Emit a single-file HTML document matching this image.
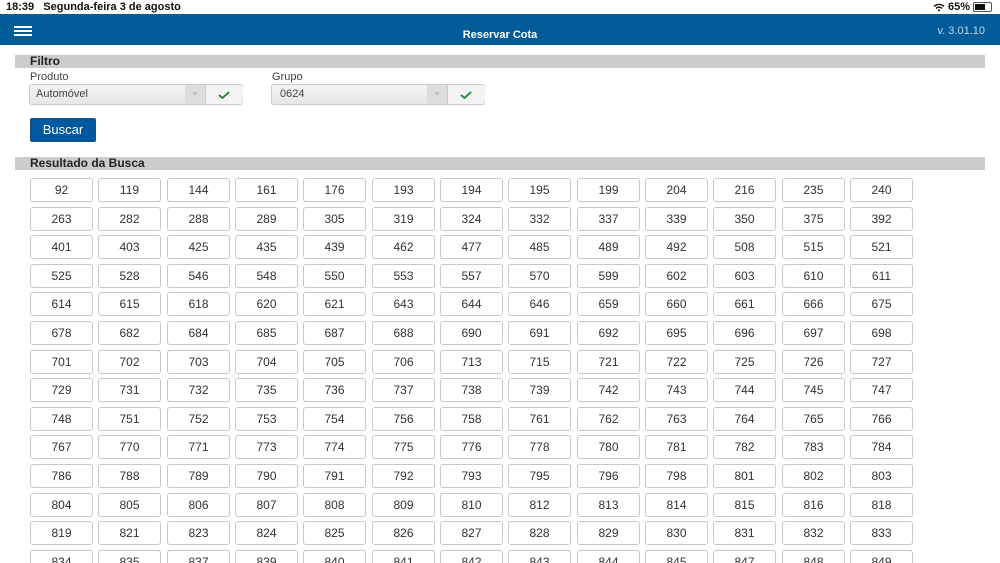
<!DOCTYPE html>
<html style="overflow:hidden;height:563px"><head><meta charset="utf-8"><style>
html,body{margin:0;width:1000px;height:563px;overflow:hidden}
body{background:#fff;font-family:"Liberation Sans",sans-serif;position:relative}
.a{position:absolute}
.bar{position:absolute;left:15px;width:970px;height:13px;background:#cccccc;font-size:12px;font-weight:bold;color:#222;line-height:13px;padding-left:15px;box-sizing:border-box}
.sel{position:absolute;height:21px;border:1px solid #ccc;border-radius:3px;background:linear-gradient(#f4f4f4,#e6e6e6);box-sizing:border-box;font-size:11px;color:#444;line-height:19px}
.b{position:absolute;width:63px;height:24px;border:1px solid #c8c8c8;border-radius:3px;box-sizing:border-box;text-align:center;line-height:22px;font-size:12px;color:#333;background:#fff}
</style></head><body>
<div class="a" style="left:6px;top:0;font-size:11px;font-weight:bold;color:#111;line-height:14px">18:39&nbsp;&nbsp; Segunda-feira 3 de agosto</div>
<div class="a" style="right:8px;top:0;font-size:11px;font-weight:bold;color:#111;line-height:14px;display:flex;align-items:center;gap:3px">
<svg width="12" height="9" viewBox="0 0 12 9"><path d="M1 3.5A7 7 0 0 1 11 3.5M3 5.5A4 4 0 0 1 9 5.5" stroke="#111" stroke-width="1.4" fill="none"/><path d="M6 8.5L4.6 7A2 2 0 0 1 7.4 7Z" fill="#111"/></svg>65%
<span style="display:inline-block;width:17px;height:8px;border:1px solid #555;border-radius:2px;position:relative"><span style="position:absolute;left:1px;top:1px;width:10px;height:6px;background:#111"></span></span></div>
<div class="a" style="left:0;top:14px;width:1000px;height:31px;background:#005b99"></div>
<div class="a" style="left:14px;top:30px;width:18px;height:2px;background:#fff;box-shadow:0 -4px 0 #fff,0 4px 0 #fff"></div>
<div class="a" style="left:0;width:1000px;top:28px;text-align:center;color:#fff;font-size:11px;font-weight:bold;line-height:14px">Reservar Cota</div>
<div class="a" style="right:15px;top:24px;color:#c5d8ea;font-size:11px;line-height:14px">v. 3.01.10</div>
<div class="bar" style="top:55px">Filtro</div>
<div class="a" style="left:30px;top:71px;font-size:11px;color:#444">Produto</div>
<div class="a" style="left:272px;top:71px;font-size:11px;color:#444">Grupo</div>
<div class="sel" style="left:29px;top:84px;width:214px"><span style="padding-left:6px">Automóvel</span><span class="a" style="left:155px;top:0;width:20px;height:19px;background:#ddd;color:#bbb;font-size:7px;text-align:center">▼</span><span class="a" style="left:175px;top:0;width:37px;height:19px;background:#f3f3f3;border-left:1px solid #ccc;border-radius:0 3px 3px 0"><svg class="a" style="left:12px;top:6px" width="12" height="8" viewBox="0 0 12 8"><path d="M1 4L4.5 7L11 1" stroke="#2e8b45" stroke-width="2" fill="none"/></svg></span></div>
<div class="sel" style="left:271px;top:84px;width:214px"><span style="padding-left:8px">0624</span><span class="a" style="left:155px;top:0;width:20px;height:19px;background:#ddd;color:#bbb;font-size:7px;text-align:center">▼</span><span class="a" style="left:175px;top:0;width:37px;height:19px;background:#f3f3f3;border-left:1px solid #ccc;border-radius:0 3px 3px 0"><svg class="a" style="left:12px;top:6px" width="12" height="8" viewBox="0 0 12 8"><path d="M1 4L4.5 7L11 1" stroke="#2e8b45" stroke-width="2" fill="none"/></svg></span></div>
<div class="a" style="left:30px;top:118px;width:66px;height:24px;background:#0059a0;border:1px solid #1a4f80;border-radius:2px;box-sizing:border-box;color:#fff;font-size:13px;text-align:center;line-height:22px">Buscar</div>
<div class="bar" style="top:157px">Resultado da Busca</div>
<div id="g"></div>
<script>
var n="92 119 144 161 176 193 194 195 199 204 216 235 240 263 282 288 289 305 319 324 332 337 339 350 375 392 401 403 425 435 439 462 477 485 489 492 508 515 521 525 528 546 548 550 553 557 570 599 602 603 610 611 614 615 618 620 621 643 644 646 659 660 661 666 675 678 682 684 685 687 688 690 691 692 695 696 697 698 701 702 703 704 705 706 713 715 721 722 725 726 727 729 731 732 735 736 737 738 739 742 743 744 745 747 748 751 752 753 754 756 758 761 762 763 764 765 766 767 770 771 773 774 775 776 778 780 781 782 783 784 786 788 789 790 791 792 793 795 796 798 801 802 803 804 805 806 807 808 809 810 812 813 814 815 816 818 819 821 823 824 825 826 827 828 829 830 831 832 833 834 835 837 839 840 841 842 843 844 845 847 848 849".split(" ");
var h="";for(var i=0;i<n.length;i++){var c=i%13,r=Math.floor(i/13);h+='<div class="b" style="left:'+Math.round(30+c*68.33)+'px;top:'+Math.round(178+r*28.6)+'px">'+n[i]+'</div>';}
document.getElementById("g").innerHTML=h;
</script>
</body></html>
